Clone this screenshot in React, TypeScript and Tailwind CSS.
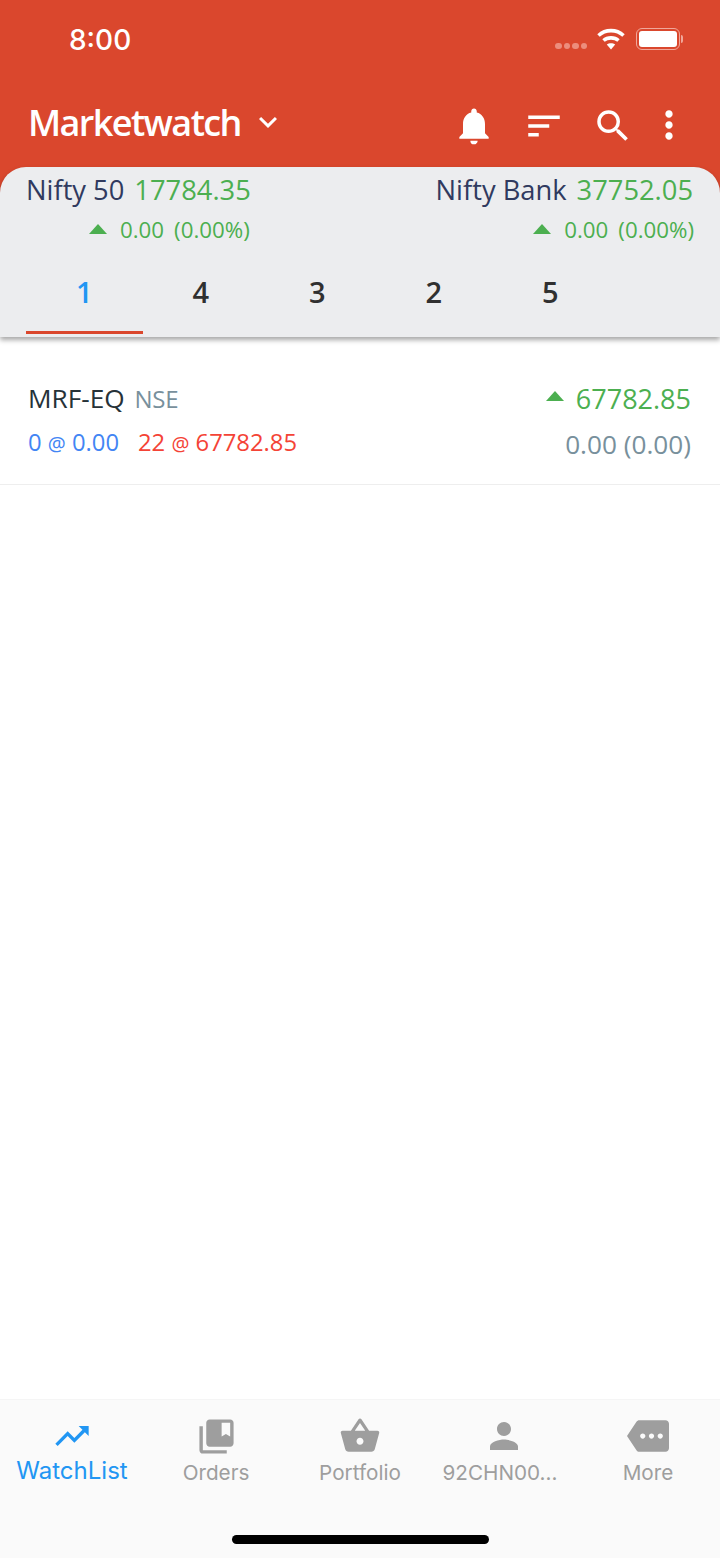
import React from "react";
import { MdNotifications, MdSort, MdSearch, MdMoreVert, MdKeyboardArrowDown, MdTrendingUp, MdCollectionsBookmark, MdShoppingBasket, MdPerson, MdMore } from "react-icons/md";

const Up = ({ className = "" }: { className?: string }) => (
  <svg width="18" height="10" viewBox="0 0 18 10" className={className}>
    <path d="M9 0L18 10H0Z" fill="#4CAF50" />
  </svg>
);

const Index = ({ name, value, left }: { name: string; value: string; left?: boolean }) => (
  <div className={left ? "flex flex-col items-start" : "flex flex-col items-end"}>
    <div className="flex h-[38px] items-center text-[27.3px]">
      <span className="text-[#303a5f]">{name}</span>
      <span className="ml-[10px] text-[#4CAF50]">{value}</span>
    </div>
    <div className={`mt-[5px] flex h-[32px] items-center self-end text-[22.3px] text-[#4CAF50] ${left ? "mr-[1px]" : "mr-[-1px]"}`}>
      <Up className="mb-[3px]" />
      <span className="ml-[13px]">0.00</span>
      <span className="ml-[10px]">(0.00%)</span>
    </div>
  </div>
);

const Tab = ({ label, active }: { label: string; active?: boolean }) => (
  <div className={`flex h-[66px] w-[116.5px] items-start justify-center border-b-[3px] pt-[2px] text-[29px] font-semibold ${active ? "border-[#DA472D] text-[#2196F3]" : "border-transparent text-[#303030]"}`}>
    {label}
  </div>
);

const NavItem = ({ icon, label, active, labelClass = "" }: { icon: React.ReactNode; label: string; active?: boolean; labelClass?: string }) => (
  <div className={`flex w-[144px] flex-col items-center ${active ? "text-[#2196F3]" : "text-[#9E9E9E]"}`}>
    <div className="flex h-[44px] items-center justify-center">{icon}</div>
    <span className={`whitespace-nowrap font-['Inter',sans-serif] leading-[30px] ${active ? "-mt-[2px] text-[24px]" : "text-[20.7px]"} ${labelClass}`}>{label}</span>
  </div>
);

export default function App() {
  return (
    <div className="flex h-[1558px] w-[720px] flex-col overflow-hidden bg-white font-['Open_Sans',sans-serif]">
      <header className="flex h-[167px] shrink-0 flex-col bg-[#DA472D] text-white">
        <div className="flex h-[78px] items-center justify-between pl-[69px] pr-[37px]">
          <span className="mt-[1px] font-['Inter',sans-serif] text-[28px] font-medium">8:00</span>
          <div className="flex items-center">
            <div className="mt-[13px] flex gap-[2px]">
              <span className="h-[6px] w-[6.5px] rounded-full bg-[#ec8d7c]" />
              <span className="h-[6px] w-[6.5px] rounded-full bg-[#ec8d7c]" />
              <span className="h-[6px] w-[6.5px] rounded-full bg-[#ec8d7c]" />
              <span className="h-[6px] w-[6.5px] rounded-full bg-[#ec8d7c]" />
            </div>
            <svg width="28" height="22" viewBox="0 0 28 22" className="ml-[10px]" fill="none" stroke="white" strokeWidth="3.6">
              <path d="M1.5 7.5C8.5 1 19.5 1 26.5 7.5" />
              <path d="M6.5 12.5C10.5 9 17.5 9 21.5 12.5" />
              <path d="M14 21.5L9.8 16.5C12 14.8 16 14.8 18.2 16.5Z" fill="white" stroke="none" />
            </svg>
            <div className="ml-[11px] flex items-center">
              <div className="h-[22px] w-[44px] rounded-[6px] border-[1.5px] border-[#f0a79a] p-[2px]">
                <div className="h-full w-full rounded-[3px] bg-white" />
              </div>
              <div className="ml-[1px] h-[8px] w-[2px] rounded-r-[2px] bg-[#f0a79a]" />
            </div>
          </div>
        </div>
        <div className="flex h-[89px] items-start pl-[28px] pr-[29px]">
          <div className="mt-[21px] flex items-center">
            <span className="text-[36px] font-semibold leading-[48px] tracking-[-1.6px]">Marketwatch</span>
            <MdKeyboardArrowDown className="ml-[9px] mb-[2px]" size={36} />
          </div>
          <div className="ml-auto mt-[26px] flex items-center">
            <MdNotifications size={44} />
            <MdSort size={42} className="ml-[27px] -mt-[1px]" />
            <MdSearch size={42} className="ml-[27px]" />
            <MdMoreVert size={44} className="ml-[13px] -mt-[2px]" />
          </div>
        </div>
      </header>

      <div className="relative z-10 shrink-0 bg-[#DA472D]">
        <section className="h-[170px] rounded-t-[26px] bg-[#ECEDEF] shadow-[0_3px_5px_rgba(0,0,0,0.35)]">
          <div className="flex justify-between pl-[26px] pr-[27px] pt-[4px]">
            <Index name="Nifty 50" value="17784.35" left />
            <Index name="Nifty Bank" value="37752.05" />
          </div>
          <div className="mt-[22px] flex pl-[26px]">
            <Tab label="1" active />
            <Tab label="4" />
            <Tab label="3" />
            <Tab label="2" />
            <Tab label="5" />
          </div>
        </section>
      </div>

      <main className="flex-1 bg-white">
        <div className="mt-[40px] flex h-[108px] justify-between border-b border-[#EEEEEE] pl-[28px] pr-[29px]">
          <div className="flex flex-col">
            <div className="flex h-[44px] items-center">
              <span className="text-[26.2px] text-[#263238]">MRF-EQ</span>
              <span className="ml-[10px] text-[24px] tracking-[-0.3px] text-[#78909C]">NSE</span>
            </div>
            <div className="mt-[3px] flex h-[38px] items-center text-[23.8px]">
              <span className="text-[#4285F4]">0 <span className="text-[20px]">@</span> 0.00</span>
              <span className="ml-[19px] text-[#F44336]">22 <span className="text-[20px]">@</span> 67782.85</span>
            </div>
          </div>
          <div className="flex flex-col items-end">
            <div className="flex h-[44px] items-center text-[27px] text-[#4CAF50]">
              <Up className="mb-[6px]" />
              <span className="ml-[12px]">67782.85</span>
            </div>
            <div className="mt-[2px] flex h-[44px] items-center text-[26.2px] text-[#78909C]">0.00 (0.00)</div>
          </div>
        </div>
      </main>

      <nav className="flex h-[159px] shrink-0 flex-col border-t border-[#F5F5F5] bg-[#FAFAFA]">
        <div className="mt-[14px] flex h-[106px] items-start">
          <NavItem active label="WatchList" icon={<MdTrendingUp size={40} />} />
          <NavItem label="Orders" icon={<MdCollectionsBookmark size={41} />} />
          <NavItem label="Portfolio" icon={<MdShoppingBasket size={42} />} />
          <NavItem label="92CHN00..." labelClass="mr-[8px]" icon={<MdPerson size={42} />} />
          <NavItem label="More" icon={<MdMore size={42} />} />
        </div>
        <div className="mx-auto mt-[15px] h-[9px] w-[257px] rounded-full bg-black" />
      </nav>
    </div>
  );
}
